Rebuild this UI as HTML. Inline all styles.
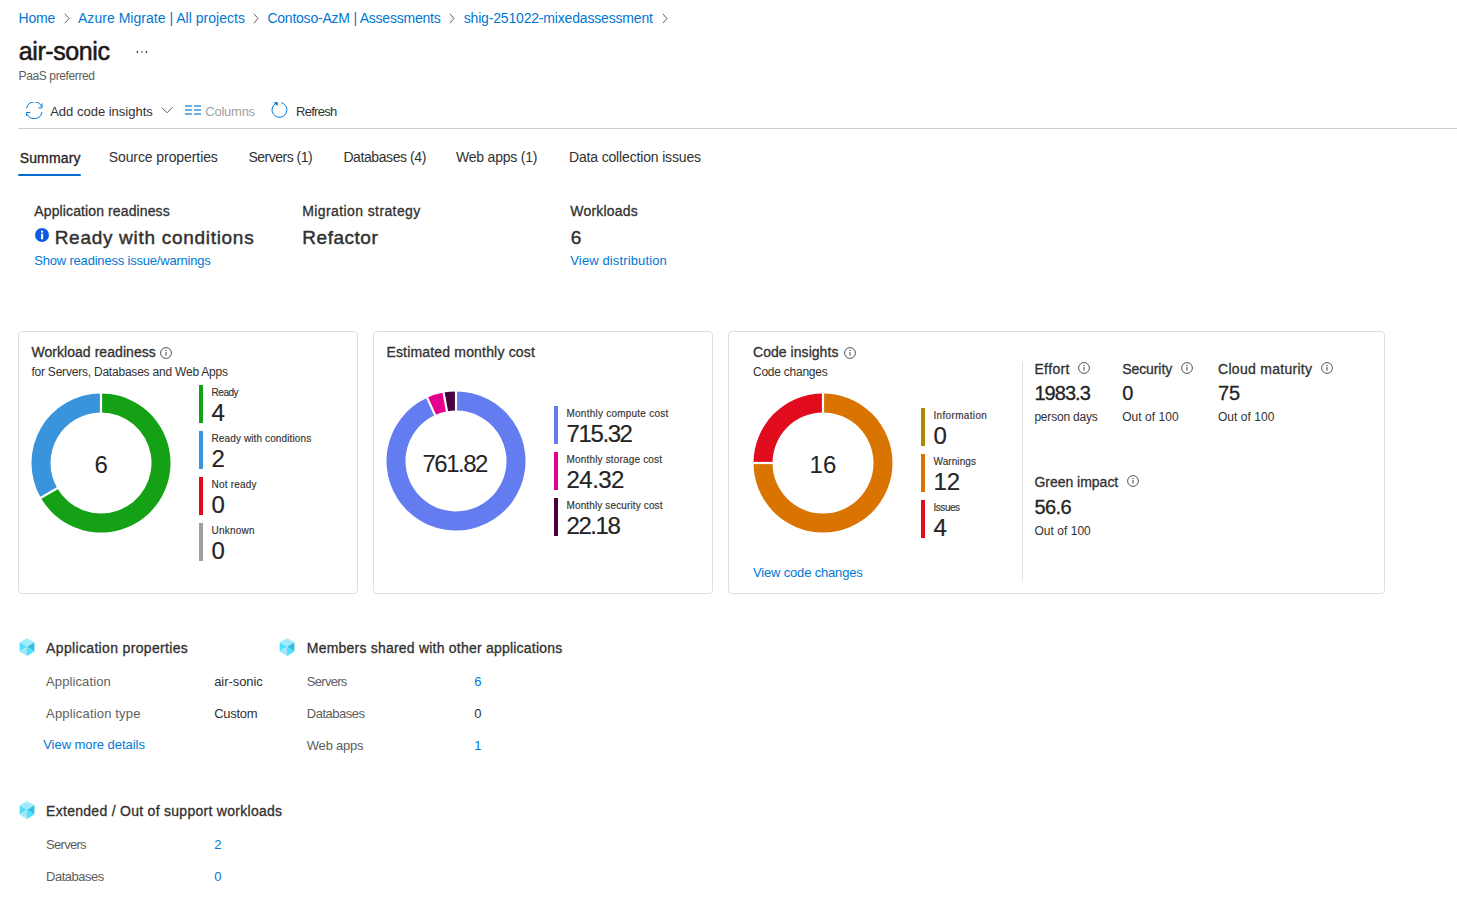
<!DOCTYPE html>
<html><head><meta charset="utf-8"><title>air-sonic</title>
<style>
html,body{margin:0;padding:0;background:#fff;width:1457px;height:918px;overflow:hidden;position:relative;font-family:"Liberation Sans",sans-serif;}
.t{position:absolute;white-space:nowrap;line-height:1;font-family:"Liberation Sans",sans-serif;}
svg{display:block}
</style></head><body>
<span class="t" style="left:18.60px;top:10.85px;font-size:14px;color:#0078d4;letter-spacing:-0.227px;">Home</span>
<span class="t" style="left:78.00px;top:10.85px;font-size:14px;color:#0078d4;letter-spacing:0.028px;">Azure Migrate | All projects</span>
<span class="t" style="left:267.40px;top:10.85px;font-size:14px;color:#0078d4;letter-spacing:-0.225px;">Contoso-AzM | Assessments</span>
<span class="t" style="left:463.70px;top:10.85px;font-size:14px;color:#0078d4;letter-spacing:-0.172px;">shig-251022-mixedassessment</span>
<svg style="position:absolute;left:63.8px;top:13px" width="6" height="11" viewBox="0 0 6 11"><path d="M0.8,0.8 L5,5.5 L0.8,10.2" fill="none" stroke="#605e5c" stroke-width="1"/></svg>
<svg style="position:absolute;left:253.2px;top:13px" width="6" height="11" viewBox="0 0 6 11"><path d="M0.8,0.8 L5,5.5 L0.8,10.2" fill="none" stroke="#605e5c" stroke-width="1"/></svg>
<svg style="position:absolute;left:449.3px;top:13px" width="6" height="11" viewBox="0 0 6 11"><path d="M0.8,0.8 L5,5.5 L0.8,10.2" fill="none" stroke="#605e5c" stroke-width="1"/></svg>
<svg style="position:absolute;left:662px;top:13px" width="6" height="11" viewBox="0 0 6 11"><path d="M0.8,0.8 L5,5.5 L0.8,10.2" fill="none" stroke="#605e5c" stroke-width="1"/></svg>
<span class="t" style="left:18.75px;top:38.54px;font-size:25px;color:#1b1a19;-webkit-text-stroke:0.55px #1b1a19;letter-spacing:-0.412px;">air-sonic</span>
<svg style="position:absolute;left:136px;top:50px" width="13" height="5" viewBox="0 0 13 5"><rect x="0.7" y="0.9" width="1.4" height="2" fill="#424242"/><rect x="5.3" y="0.9" width="1.4" height="2" fill="#777"/><rect x="9.7" y="0.9" width="1.4" height="2" fill="#424242"/></svg>
<span class="t" style="left:18.60px;top:69.64px;font-size:12px;color:#605e5c;letter-spacing:-0.382px;">PaaS preferred</span>
<svg style="position:absolute;left:26px;top:102px" width="17" height="17" viewBox="0 0 17 17" fill="none" stroke="#0078d4" stroke-width="1">
<path d="M0.6,6.2 A7.9,7.9 0 0 1 15.6,4.6"/><path d="M16,1.4 L16,5.9 L12.3,5.9"/>
<path d="M16,10.2 A7.9,7.9 0 0 1 1.2,12.3"/><path d="M0.6,14 L0.6,10.5 L4.2,10.5"/></svg>
<span class="t" style="left:50.20px;top:104.90px;font-size:13px;color:#323130;">Add code insights</span>
<svg style="position:absolute;left:160px;top:106px" width="14" height="8" viewBox="0 0 14 8"><path d="M1.5,1.3 L7,6.8 L12.5,1.3" fill="none" stroke="#605e5c" stroke-width="1"/></svg>
<svg style="position:absolute;left:185px;top:105px" width="16" height="10" viewBox="0 0 16 10" fill="#6cb0e6">
<rect x="0" y="0" width="7" height="2"/><rect x="0" y="4" width="7" height="2"/><rect x="0" y="8" width="7" height="2"/>
<rect x="9" y="0" width="7" height="2"/><rect x="9" y="4" width="7" height="2"/><rect x="9" y="8" width="7" height="2"/></svg>
<span class="t" style="left:205.30px;top:104.90px;font-size:13px;color:#a19f9d;letter-spacing:-0.247px;">Columns</span>
<svg style="position:absolute;left:271px;top:101px" width="18" height="18" viewBox="0 0 18 18" fill="none" stroke="#0078d4" stroke-width="1">
<path d="M10.16,1.64 A7.4,7.4 0 1 1 5.73,1.99"/><path d="M2.4,1.2 L6.9,1.2 L6.5,4.9 Z" fill="#0078d4" stroke="none"/></svg>
<span class="t" style="left:296.00px;top:105.00px;font-size:13px;color:#323130;letter-spacing:-0.717px;">Refresh</span>
<div style="position:absolute;left:18px;top:128px;width:1439px;height:1px;background:#cccccc"></div>
<span class="t" style="left:19.70px;top:151.25px;font-size:14px;color:#242424;-webkit-text-stroke:0.31px #242424;letter-spacing:0.147px;">Summary</span>
<div style="position:absolute;left:18px;top:174px;width:63px;height:2px;background:#006cd2;border-radius:1px"></div>
<span class="t" style="left:108.70px;top:150.15px;font-size:14px;color:#323130;letter-spacing:-0.083px;">Source properties</span>
<span class="t" style="left:248.50px;top:150.15px;font-size:14px;color:#323130;letter-spacing:-0.503px;">Servers (1)</span>
<span class="t" style="left:343.40px;top:150.15px;font-size:14px;color:#323130;letter-spacing:-0.410px;">Databases (4)</span>
<span class="t" style="left:456.00px;top:150.15px;font-size:14px;color:#323130;letter-spacing:-0.208px;">Web apps (1)</span>
<span class="t" style="left:569.00px;top:150.15px;font-size:14px;color:#323130;letter-spacing:-0.161px;">Data collection issues</span>
<span class="t" style="left:34.30px;top:203.95px;font-size:14px;color:#323130;-webkit-text-stroke:0.31px #323130;letter-spacing:0.117px;">Application readiness</span>
<svg style="position:absolute;left:34.5px;top:228px" width="14" height="14" viewBox="0 0 14 14"><circle cx="7" cy="7" r="7" fill="#0f5ce0"/><rect x="6" y="5.7" width="2.1" height="5.6" fill="#fff"/><circle cx="7.05" cy="3.7" r="1.15" fill="#fff"/></svg>
<span class="t" style="left:54.70px;top:227.62px;font-size:19px;color:#323130;-webkit-text-stroke:0.45px #323130;letter-spacing:0.706px;">Ready with conditions</span>
<span class="t" style="left:34.30px;top:253.70px;font-size:13px;color:#0078d4;letter-spacing:-0.198px;">Show readiness issue/warnings</span>
<span class="t" style="left:302.30px;top:203.95px;font-size:14px;color:#323130;-webkit-text-stroke:0.31px #323130;letter-spacing:0.394px;">Migration strategy</span>
<span class="t" style="left:302.30px;top:227.62px;font-size:19px;color:#323130;-webkit-text-stroke:0.45px #323130;letter-spacing:0.526px;">Refactor</span>
<span class="t" style="left:570.30px;top:203.95px;font-size:14px;color:#323130;-webkit-text-stroke:0.31px #323130;letter-spacing:0.204px;">Workloads</span>
<span class="t" style="left:570.80px;top:227.62px;font-size:19px;color:#323130;-webkit-text-stroke:0.45px #323130;">6</span>
<span class="t" style="left:570.30px;top:253.70px;font-size:13px;color:#0078d4;letter-spacing:0.128px;">View distribution</span>
<div style="position:absolute;left:18px;top:331px;width:338px;height:261px;border:1px solid #e1dfdd;border-radius:4px"></div>
<div style="position:absolute;left:373px;top:331px;width:338px;height:261px;border:1px solid #e1dfdd;border-radius:4px"></div>
<div style="position:absolute;left:728px;top:331px;width:655px;height:261px;border:1px solid #e1dfdd;border-radius:4px"></div>
<span class="t" style="left:31.40px;top:345.35px;font-size:14px;color:#323130;-webkit-text-stroke:0.31px #323130;letter-spacing:0.054px;">Workload readiness</span>
<svg style="position:absolute;left:160px;top:347px" width="12" height="12" viewBox="0 0 12 12"><circle cx="6" cy="6" r="5.4" fill="none" stroke="#424242" stroke-width="0.9"/><rect x="5.5" y="5" width="1" height="3.6" fill="#424242"/><circle cx="6" cy="3.5" r="0.65" fill="#424242"/></svg>
<span class="t" style="left:31.40px;top:366.24px;font-size:12px;color:#323130;letter-spacing:-0.214px;">for Servers, Databases and Web Apps</span>
<svg style="position:absolute;left:25.80px;top:387.60px" width="150" height="150" viewBox="0 0 150 150"><path d="M75.00,5.50 A69.5,69.5 0 1 1 14.81,109.75 L31.27,100.25 A50.5,50.5 0 1 0 75.00,24.50 Z" fill="#15a115"/><path d="M14.81,109.75 A69.5,69.5 0 0 1 75.00,5.50 L75.00,24.50 A50.5,50.5 0 0 0 31.27,100.25 Z" fill="#3a94dc"/><line x1="75.00" y1="26.50" x2="75.00" y2="3.50" stroke="#fff" stroke-width="2.2"/><line x1="33.00" y1="99.25" x2="13.08" y2="110.75" stroke="#fff" stroke-width="2.2"/></svg>
<span class="t" style="left:94.60px;top:453.38px;font-size:24px;color:#242424;">6</span>
<div style="position:absolute;left:199px;top:385px;width:4px;height:38px;background:#15a115"></div>
<span class="t" style="left:211.50px;top:387.74px;font-size:10px;color:#323130;-webkit-text-stroke:0.14px #323130;letter-spacing:-0.450px;">Ready</span>
<span class="t" style="left:211.50px;top:400.88px;font-size:24px;color:#242424;-webkit-text-stroke:0.2px #242424;">4</span>
<div style="position:absolute;left:199px;top:431px;width:4px;height:38px;background:#3a94dc"></div>
<span class="t" style="left:211.50px;top:433.74px;font-size:10px;color:#323130;-webkit-text-stroke:0.14px #323130;letter-spacing:0.120px;">Ready with conditions</span>
<span class="t" style="left:211.50px;top:446.88px;font-size:24px;color:#242424;-webkit-text-stroke:0.2px #242424;">2</span>
<div style="position:absolute;left:199px;top:477px;width:4px;height:38px;background:#e00b1c"></div>
<span class="t" style="left:211.50px;top:479.74px;font-size:10px;color:#323130;-webkit-text-stroke:0.14px #323130;letter-spacing:0.206px;">Not ready</span>
<span class="t" style="left:211.50px;top:492.88px;font-size:24px;color:#242424;-webkit-text-stroke:0.2px #242424;">0</span>
<div style="position:absolute;left:199px;top:523px;width:4px;height:38px;background:#a19f9d"></div>
<span class="t" style="left:211.50px;top:525.74px;font-size:10px;color:#323130;-webkit-text-stroke:0.14px #323130;letter-spacing:0.217px;">Unknown</span>
<span class="t" style="left:211.50px;top:538.88px;font-size:24px;color:#242424;-webkit-text-stroke:0.2px #242424;">0</span>
<span class="t" style="left:386.40px;top:345.35px;font-size:14px;color:#323130;-webkit-text-stroke:0.31px #323130;letter-spacing:0.178px;">Estimated monthly cost</span>
<svg style="position:absolute;left:380.80px;top:385.80px" width="150" height="150" viewBox="0 0 150 150"><path d="M75.00,5.50 A69.5,69.5 0 1 1 46.18,11.76 L54.06,29.05 A50.5,50.5 0 1 0 75.00,24.50 Z" fill="#637cef"/><path d="M46.18,11.76 A69.5,69.5 0 0 1 62.57,6.62 L65.97,25.31 A50.5,50.5 0 0 0 54.06,29.05 Z" fill="#e3008c"/><path d="M62.57,6.62 A69.5,69.5 0 0 1 75.00,5.50 L75.00,24.50 A50.5,50.5 0 0 0 65.97,25.31 Z" fill="#4b003f"/><line x1="75.00" y1="26.50" x2="75.00" y2="3.50" stroke="#fff" stroke-width="2.2"/><line x1="54.89" y1="30.87" x2="45.35" y2="9.94" stroke="#fff" stroke-width="2.2"/><line x1="66.33" y1="27.28" x2="62.22" y2="4.65" stroke="#fff" stroke-width="2.2"/></svg>
<span class="t" style="left:422.40px;top:452.08px;font-size:24px;color:#242424;letter-spacing:-1.468px;">761.82</span>
<div style="position:absolute;left:554px;top:406px;width:4px;height:38px;background:#637cef"></div>
<span class="t" style="left:566.50px;top:408.74px;font-size:10px;color:#323130;-webkit-text-stroke:0.14px #323130;letter-spacing:0.234px;">Monthly compute cost</span>
<span class="t" style="left:566.50px;top:421.88px;font-size:24px;color:#242424;letter-spacing:-1.388px;-webkit-text-stroke:0.2px #242424;">715.32</span>
<div style="position:absolute;left:554px;top:452px;width:4px;height:38px;background:#e3008c"></div>
<span class="t" style="left:566.50px;top:454.74px;font-size:10px;color:#323130;-webkit-text-stroke:0.14px #323130;letter-spacing:0.171px;">Monthly storage cost</span>
<span class="t" style="left:566.50px;top:467.88px;font-size:24px;color:#242424;letter-spacing:-0.530px;-webkit-text-stroke:0.2px #242424;">24.32</span>
<div style="position:absolute;left:554px;top:498px;width:4px;height:38px;background:#4b003f"></div>
<span class="t" style="left:566.50px;top:500.74px;font-size:10px;color:#323130;-webkit-text-stroke:0.14px #323130;letter-spacing:0.133px;">Monthly security cost</span>
<span class="t" style="left:566.50px;top:513.88px;font-size:24px;color:#242424;letter-spacing:-1.455px;-webkit-text-stroke:0.2px #242424;">22.18</span>
<span class="t" style="left:753.00px;top:345.35px;font-size:14px;color:#323130;-webkit-text-stroke:0.31px #323130;letter-spacing:0.047px;">Code insights</span>
<svg style="position:absolute;left:843.5px;top:347px" width="12" height="12" viewBox="0 0 12 12"><circle cx="6" cy="6" r="5.4" fill="none" stroke="#424242" stroke-width="0.9"/><rect x="5.5" y="5" width="1" height="3.6" fill="#424242"/><circle cx="6" cy="3.5" r="0.65" fill="#424242"/></svg>
<span class="t" style="left:753.00px;top:366.24px;font-size:12px;color:#323130;letter-spacing:-0.245px;">Code changes</span>
<svg style="position:absolute;left:747.70px;top:387.60px" width="150" height="150" viewBox="0 0 150 150"><path d="M75.00,5.50 A69.5,69.5 0 1 1 5.50,75.00 L24.50,75.00 A50.5,50.5 0 1 0 75.00,24.50 Z" fill="#da7400"/><path d="M5.50,75.00 A69.5,69.5 0 0 1 75.00,5.50 L75.00,24.50 A50.5,50.5 0 0 0 24.50,75.00 Z" fill="#e00b1c"/><line x1="75.00" y1="26.50" x2="75.00" y2="3.50" stroke="#fff" stroke-width="2.2"/><line x1="26.50" y1="75.00" x2="3.50" y2="75.00" stroke="#fff" stroke-width="2.2"/></svg>
<span class="t" style="left:809.58px;top:453.38px;font-size:24px;color:#242424;">16</span>
<div style="position:absolute;left:921px;top:408px;width:4px;height:38px;background:#a98a00"></div>
<span class="t" style="left:933.50px;top:410.74px;font-size:10px;color:#323130;-webkit-text-stroke:0.14px #323130;letter-spacing:0.335px;">Information</span>
<span class="t" style="left:933.50px;top:423.88px;font-size:24px;color:#242424;-webkit-text-stroke:0.2px #242424;">0</span>
<div style="position:absolute;left:921px;top:454px;width:4px;height:38px;background:#da7400"></div>
<span class="t" style="left:933.50px;top:456.74px;font-size:10px;color:#323130;-webkit-text-stroke:0.14px #323130;letter-spacing:0.079px;">Warnings</span>
<span class="t" style="left:933.50px;top:469.88px;font-size:24px;color:#242424;-webkit-text-stroke:0.2px #242424;">12</span>
<div style="position:absolute;left:921px;top:500px;width:4px;height:38px;background:#e00b1c"></div>
<span class="t" style="left:933.50px;top:502.74px;font-size:10px;color:#323130;-webkit-text-stroke:0.14px #323130;letter-spacing:-0.460px;">Issues</span>
<span class="t" style="left:933.50px;top:515.88px;font-size:24px;color:#242424;-webkit-text-stroke:0.2px #242424;">4</span>
<span class="t" style="left:753.00px;top:566.00px;font-size:13px;color:#0078d4;letter-spacing:-0.170px;">View code changes</span>
<div style="position:absolute;left:1022px;top:362px;width:1px;height:219px;background:#e1dfdd"></div>
<span class="t" style="left:1034.40px;top:361.55px;font-size:14px;color:#323130;-webkit-text-stroke:0.31px #323130;letter-spacing:0.384px;">Effort</span>
<svg style="position:absolute;left:1078px;top:362.4px" width="12" height="12" viewBox="0 0 12 12"><circle cx="6" cy="6" r="5.4" fill="none" stroke="#424242" stroke-width="0.9"/><rect x="5.5" y="5" width="1" height="3.6" fill="#424242"/><circle cx="6" cy="3.5" r="0.65" fill="#424242"/></svg>
<span class="t" style="left:1034.40px;top:382.97px;font-size:20px;color:#242424;-webkit-text-stroke:0.30px #242424;letter-spacing:-0.960px;">1983.3</span>
<span class="t" style="left:1034.40px;top:411.24px;font-size:12px;color:#323130;letter-spacing:-0.200px;">person days</span>
<span class="t" style="left:1122.20px;top:361.55px;font-size:14px;color:#323130;-webkit-text-stroke:0.31px #323130;letter-spacing:-0.077px;">Security</span>
<svg style="position:absolute;left:1180.5px;top:362.4px" width="12" height="12" viewBox="0 0 12 12"><circle cx="6" cy="6" r="5.4" fill="none" stroke="#424242" stroke-width="0.9"/><rect x="5.5" y="5" width="1" height="3.6" fill="#424242"/><circle cx="6" cy="3.5" r="0.65" fill="#424242"/></svg>
<span class="t" style="left:1122.20px;top:382.97px;font-size:20px;color:#242424;-webkit-text-stroke:0.30px #242424;">0</span>
<span class="t" style="left:1122.20px;top:411.24px;font-size:12px;color:#323130;letter-spacing:0.040px;">Out of 100</span>
<span class="t" style="left:1218.00px;top:361.55px;font-size:14px;color:#323130;-webkit-text-stroke:0.31px #323130;letter-spacing:0.290px;">Cloud maturity</span>
<svg style="position:absolute;left:1321.3px;top:362.4px" width="12" height="12" viewBox="0 0 12 12"><circle cx="6" cy="6" r="5.4" fill="none" stroke="#424242" stroke-width="0.9"/><rect x="5.5" y="5" width="1" height="3.6" fill="#424242"/><circle cx="6" cy="3.5" r="0.65" fill="#424242"/></svg>
<span class="t" style="left:1218.00px;top:382.97px;font-size:20px;color:#242424;-webkit-text-stroke:0.30px #242424;">75</span>
<span class="t" style="left:1218.00px;top:411.24px;font-size:12px;color:#323130;letter-spacing:0.040px;">Out of 100</span>
<span class="t" style="left:1034.40px;top:475.25px;font-size:14px;color:#323130;-webkit-text-stroke:0.31px #323130;letter-spacing:-0.015px;">Green impact</span>
<svg style="position:absolute;left:1127px;top:475px" width="12" height="12" viewBox="0 0 12 12"><circle cx="6" cy="6" r="5.4" fill="none" stroke="#424242" stroke-width="0.9"/><rect x="5.5" y="5" width="1" height="3.6" fill="#424242"/><circle cx="6" cy="3.5" r="0.65" fill="#424242"/></svg>
<span class="t" style="left:1034.40px;top:496.67px;font-size:20px;color:#242424;-webkit-text-stroke:0.30px #242424;letter-spacing:-0.567px;">56.6</span>
<span class="t" style="left:1034.40px;top:524.94px;font-size:12px;color:#323130;letter-spacing:0.040px;">Out of 100</span>
<svg style="position:absolute;left:19px;top:638px" width="16" height="18" viewBox="0 0 16 18">
<path d="M8,0.2 L15.4,4.3 L8,8.7 L0.6,4.3 Z" fill="#a2ebfd"/>
<path d="M0.6,4.3 L8,8.7 L0.6,13.6 Z" fill="#50e0fb"/>
<path d="M0.6,13.6 L8,8.7 L8,18 Z" fill="#9fe8fb"/>
<path d="M8,8.7 L15.4,4.3 L15.4,13.6 Z" fill="#32bfdf"/>
<path d="M8,8.7 L15.4,13.6 L8,18 Z" fill="#50e0fb"/>
</svg>
<span class="t" style="left:46.10px;top:640.85px;font-size:14px;color:#323130;-webkit-text-stroke:0.31px #323130;letter-spacing:0.338px;">Application properties</span>
<span class="t" style="left:46.10px;top:674.90px;font-size:13px;color:#605e5c;letter-spacing:0.103px;">Application</span>
<span class="t" style="left:214.20px;top:674.90px;font-size:13px;color:#323130;letter-spacing:-0.067px;">air-sonic</span>
<span class="t" style="left:46.10px;top:707.00px;font-size:13px;color:#605e5c;letter-spacing:0.168px;">Application type</span>
<span class="t" style="left:214.20px;top:707.00px;font-size:13px;color:#323130;letter-spacing:-0.277px;">Custom</span>
<span class="t" style="left:43.20px;top:737.50px;font-size:13px;color:#0078d4;letter-spacing:-0.036px;">View more details</span>
<svg style="position:absolute;left:279px;top:638px" width="16" height="18" viewBox="0 0 16 18">
<path d="M8,0.2 L15.4,4.3 L8,8.7 L0.6,4.3 Z" fill="#a2ebfd"/>
<path d="M0.6,4.3 L8,8.7 L0.6,13.6 Z" fill="#50e0fb"/>
<path d="M0.6,13.6 L8,8.7 L8,18 Z" fill="#9fe8fb"/>
<path d="M8,8.7 L15.4,4.3 L15.4,13.6 Z" fill="#32bfdf"/>
<path d="M8,8.7 L15.4,13.6 L8,18 Z" fill="#50e0fb"/>
</svg>
<span class="t" style="left:306.80px;top:640.85px;font-size:14px;color:#323130;-webkit-text-stroke:0.31px #323130;letter-spacing:0.215px;">Members shared with other applications</span>
<span class="t" style="left:306.80px;top:674.90px;font-size:13px;color:#605e5c;letter-spacing:-0.714px;">Servers</span>
<span class="t" style="left:474.30px;top:674.90px;font-size:13px;color:#0078d4;">6</span>
<span class="t" style="left:306.80px;top:707.00px;font-size:13px;color:#605e5c;letter-spacing:-0.505px;">Databases</span>
<span class="t" style="left:474.30px;top:707.00px;font-size:13px;color:#323130;">0</span>
<span class="t" style="left:306.80px;top:739.00px;font-size:13px;color:#605e5c;letter-spacing:-0.215px;">Web apps</span>
<span class="t" style="left:474.20px;top:739.00px;font-size:13px;color:#0078d4;">1</span>
<svg style="position:absolute;left:19px;top:801px" width="16" height="18" viewBox="0 0 16 18">
<path d="M8,0.2 L15.4,4.3 L8,8.7 L0.6,4.3 Z" fill="#a2ebfd"/>
<path d="M0.6,4.3 L8,8.7 L0.6,13.6 Z" fill="#50e0fb"/>
<path d="M0.6,13.6 L8,8.7 L8,18 Z" fill="#9fe8fb"/>
<path d="M8,8.7 L15.4,4.3 L15.4,13.6 Z" fill="#32bfdf"/>
<path d="M8,8.7 L15.4,13.6 L8,18 Z" fill="#50e0fb"/>
</svg>
<span class="t" style="left:46.10px;top:803.75px;font-size:14px;color:#323130;-webkit-text-stroke:0.31px #323130;letter-spacing:0.281px;">Extended / Out of support workloads</span>
<span class="t" style="left:46.10px;top:837.60px;font-size:13px;color:#605e5c;letter-spacing:-0.714px;">Servers</span>
<span class="t" style="left:214.20px;top:837.60px;font-size:13px;color:#0078d4;">2</span>
<span class="t" style="left:46.10px;top:870.10px;font-size:13px;color:#605e5c;letter-spacing:-0.505px;">Databases</span>
<span class="t" style="left:214.20px;top:870.10px;font-size:13px;color:#0078d4;">0</span>
</body></html>
